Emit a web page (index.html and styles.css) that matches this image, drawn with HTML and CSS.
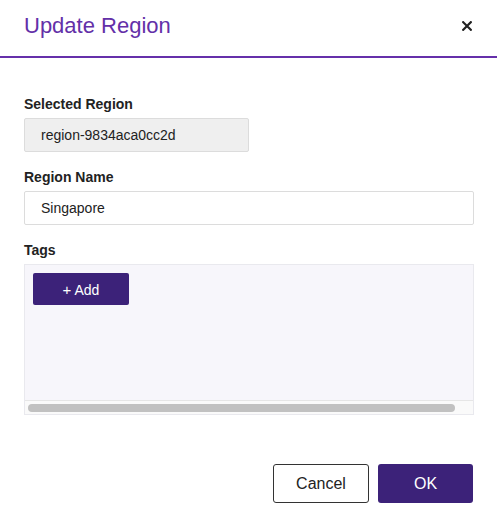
FILE: index.html
```html
<!DOCTYPE html>
<html>
<head>
<meta charset="utf-8">
<link rel="stylesheet" href="styles.css">
</head>
<body>
<div class="modal">
  <div class="header">
    <h1 class="title">Update Region</h1>
    <button class="close" aria-label="Close">
      <svg width="10" height="10" viewBox="0 0 10 10"><path d="M1.2 1.2 L8.8 8.8 M8.8 1.2 L1.2 8.8" stroke="#222" stroke-width="2.2" stroke-linecap="square"/></svg>
    </button>
  </div>
  <div class="body">
    <div class="field">
      <label class="label">Selected Region</label>
      <div class="input input-readonly">region-9834aca0cc2d</div>
    </div>
    <div class="field">
      <label class="label">Region Name</label>
      <div class="input input-full">Singapore</div>
    </div>
    <div class="field">
      <label class="label">Tags</label>
      <div class="tags">
        <div class="tags-content">
          <button class="add-btn"><span class="plus">+</span> Add</button>
        </div>
        <div class="track"><div class="thumb"></div></div>
      </div>
    </div>
    <div class="footer">
      <button class="btn btn-cancel">Cancel</button>
      <button class="btn btn-ok">OK</button>
    </div>
  </div>
</div>
</body>
</html>
```
FILE: styles.css
```css
* { box-sizing: border-box; }
body {
  margin: 0;
  background: #fff;
  font-family: "Liberation Sans", Arial, sans-serif;
  color: #222;
}
.modal { width: 497px; }
.header {
  display: flex;
  justify-content: space-between;
  align-items: flex-start;
  height: 58px;
  padding: 14px 25px 0 24px;
  border-bottom: 2px solid #6530aa;
}
.title {
  margin: 0;
  font-size: 22px;
  line-height: 24px;
  font-weight: normal;
  color: #6330a8;
}
.close {
  margin-top: 7px;
  padding: 0;
  border: 0;
  background: none;
  width: 10px;
  height: 10px;
  display: block;
}
.close svg { display: block; }
.body {
  padding: 38px 23px 0 24px;
}
.field {
  display: flex;
  flex-direction: column;
  margin-bottom: 17px;
}
.label {
  font-size: 14px;
  line-height: 16px;
  font-weight: bold;
  color: #222;
  margin-bottom: 6px;
}
.input {
  height: 34px;
  border: 1px solid #dcdcdc;
  border-radius: 2px;
  padding: 0 16px;
  font-size: 14px;
  line-height: 32px;
  color: #222;
  background: #fff;
}
.input-readonly {
  width: 225px;
  background: #efefef;
}
.input-full { width: 450px; }
.tags {
  width: 450px;
  height: 151px;
  border: 1px solid #e9e9ee;
  background: #f7f6fb;
  display: flex;
  flex-direction: column;
}
.tags-content {
  flex: 1;
  padding: 8px;
}
.add-btn {
  width: 96px;
  height: 32px;
  border: 0;
  border-radius: 2px;
  background: #3c2279;
  color: #fff;
  font-family: "Liberation Sans", Arial, sans-serif;
  font-size: 14px;
  display: block;
  padding: 0;
}
.plus { font-weight: 300; font-size: 15px; }
.track {
  height: 14px;
  border-top: 1px solid #e6e6e6;
  background: #fafafa;
  padding: 3px 17px 0 3px;
}
.thumb {
  height: 8px;
  width: 427px;
  border-radius: 4px;
  background: #c1c1c1;
}
.footer {
  display: flex;
  justify-content: flex-end;
  gap: 9px;
  margin-top: 49px;
  width: 449px;
}
.btn {
  height: 39px;
  font-family: "Liberation Sans", Arial, sans-serif;
  font-size: 16px;
  border-radius: 3px;
  padding: 0;
}
.btn-cancel {
  width: 96px;
  background: #fff;
  border: 1px solid #333;
  color: #222;
}
.btn-ok {
  width: 95px;
  background: #3c2279;
  border: 0;
  color: #fff;
}
```
